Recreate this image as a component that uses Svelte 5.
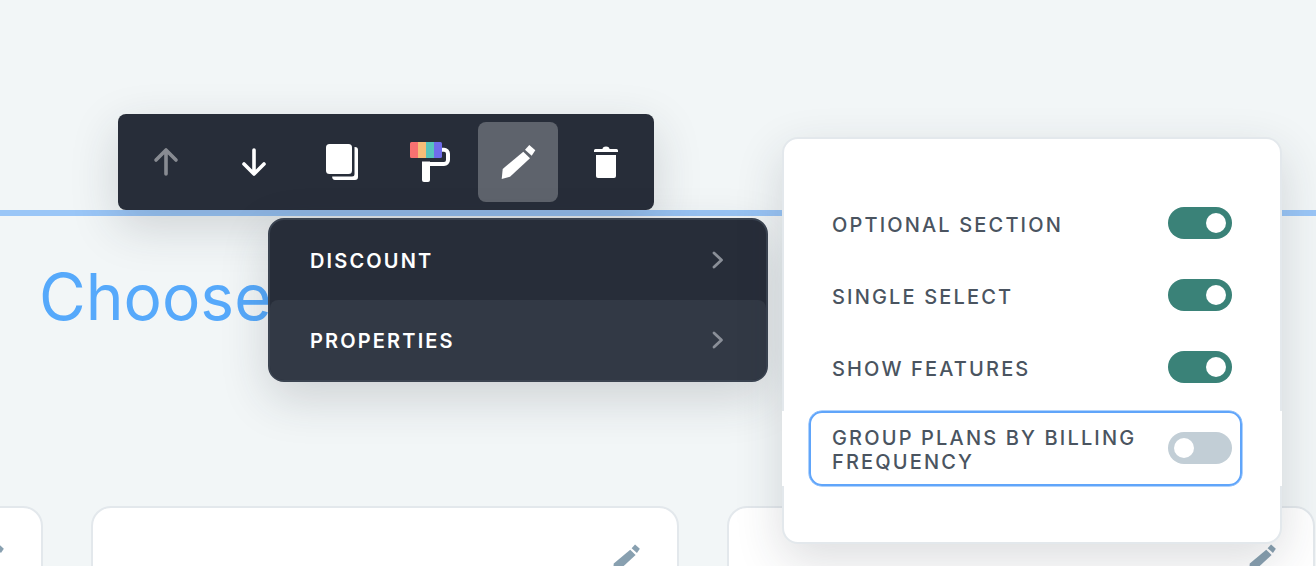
<script>
	const menuItems = [
		{ label: 'DISCOUNT', active: false },
		{ label: 'PROPERTIES', active: true }
	];

	const settings = [
		{ label: 'OPTIONAL SECTION', on: true, focused: false },
		{ label: 'SINGLE SELECT', on: true, focused: false },
		{ label: 'SHOW FEATURES', on: true, focused: false },
		{ label: 'GROUP PLANS BY BILLING FREQUENCY', on: false, focused: true }
	];

	const pencilBody = 'M3.7 37 L4.7 27 L25.3 9.7 L32 16.3 L12 34.7 Z';
	const pencilCap = 'M31.3 3 L37.3 8.3 L33.7 13.7 L27 7.7 Z';
</script>

<div class="page">
	<section class="section">
		<h1 class="title">Choose</h1>
		<div class="cards">
			{#each [0, 1, 2] as card (card)}
				<div class="card">
					<svg class="card-edit" viewBox="0 0 40 40" width="32" height="32">
						<path d={pencilBody} />
						<path d={pencilCap} />
					</svg>
				</div>
			{/each}
		</div>
	</section>

	<div class="toolbar">
		<button class="tool" type="button" aria-label="Move up">
			<svg viewBox="0 0 40 40" width="40" height="40" fill="none" stroke="#fff" stroke-opacity="0.45" stroke-width="3.6" stroke-linecap="round" stroke-linejoin="round">
				<path d="M20 8 V32 M10 18 L20 8 L30 18" />
			</svg>
		</button>
		<button class="tool" type="button" aria-label="Move down">
			<svg viewBox="0 0 40 40" width="40" height="40" fill="none" stroke="#fff" stroke-width="3.6" stroke-linecap="round" stroke-linejoin="round">
				<path d="M20 8 V32 M10 22 L20 32 L30 22" />
			</svg>
		</button>
		<button class="tool" type="button" aria-label="Duplicate">
			<svg viewBox="0 0 40 40" width="40" height="40" fill="#fff">
				<rect x="4" y="2" width="26" height="30" rx="3.5" />
				<path d="M32.5 5 H33 A3 3 0 0 1 36 8 V35 A3 3 0 0 1 33 38 H13 A3 3 0 0 1 10.200 34.500 H30 A2.500 2.500 0 0 0 32.500 32 Z" />
			</svg>
		</button>
		<button class="tool" type="button" aria-label="Theme">
			<svg viewBox="0 0 40 40" width="40" height="40" fill="none">
				<path d="M30 7.800 H34 A4 4 0 0 1 38 11.800 V18 A4 4 0 0 1 34 22 H16" stroke="#fff" stroke-width="4" />
				<path d="M12 19.500 H20 V38 A2 2 0 0 1 18 40 H14 A2 2 0 0 1 12 38 Z" fill="#fff" />
				<path d="M1.500 0 H8 V16 H1.500 A1.500 1.500 0 0 1 0 14.500 V1.500 A1.500 1.500 0 0 1 1.500 0 Z" fill="#f87171" />
				<rect x="8" y="0" width="8" height="16" fill="#f6bd77" />
				<rect x="16" y="0" width="8" height="16" fill="#56c4bb" />
				<path d="M24 0 H30.500 A1.500 1.500 0 0 1 32 1.500 V14.500 A1.500 1.500 0 0 1 30.500 16 H24 Z" fill="#6f6cea" />
			</svg>
		</button>
		<button class="tool selected" type="button" aria-label="Edit">
			<svg viewBox="0 0 40 40" width="40" height="40" fill="#fff">
				<path d={pencilBody} />
				<path d={pencilCap} />
			</svg>
		</button>
		<button class="tool" type="button" aria-label="Delete">
			<svg viewBox="0 0 40 40" width="40" height="40" fill="#fff">
				<path d="M8 8.500 A1.500 1.500 0 0 1 9.500 7 H16.500 A3.500 2.500 0 0 1 23.500 7 H30.500 A1.500 1.500 0 0 1 32 8.500 V10 H8 Z" />
				<path d="M10 13 H30 V34 A2 2 0 0 1 28 36 H12 A2 2 0 0 1 10 34 Z" />
			</svg>
		</button>
	</div>

	<div class="menu">
		{#each menuItems as item (item.label)}
			<div class="menu-item" class:active={item.active}>
				<span class="menu-label">{item.label}</span>
				<svg viewBox="0 0 14 20" width="14" height="20" fill="none" stroke="#8a8f98" stroke-width="2.8" stroke-linecap="round" stroke-linejoin="round">
					<path d="M2 3 L9.500 10 L2 17" />
				</svg>
			</div>
		{/each}
	</div>

	<aside class="panel">
		{#each settings as row (row.label)}
			<div class="band" class:focused={row.focused}>
				<div class="row">
					<span class="row-label">{row.label}</span>
					<span class="switch" class:on={row.on}><span class="knob"></span></span>
				</div>
			</div>
		{/each}
	</aside>
</div>

<style>
	:global(body) {
		margin: 0;
		background: #f2f6f7;
		font-family: Inter, "Liberation Sans", sans-serif;
	}

	.page {
		position: relative;
		height: 566px;
		overflow: hidden;
		padding-top: 210px;
		box-sizing: border-box;
	}

	.section {
		border-top: 6px solid #9ac6f7;
	}

	.title {
		margin: 0;
		padding: 41px 0 0 39px;
		font-size: 64px;
		line-height: 80px;
		font-weight: 400;
		color: #56a9fb;
	}

	.cards {
		display: flex;
		gap: 48px;
		margin: 169px 0 0 -545px;
	}

	.card {
		flex: none;
		display: flex;
		justify-content: flex-end;
		width: 588px;
		height: 300px;
		padding: 34px 35px;
		box-sizing: border-box;
		background: #fff;
		border: 2px solid #e3e8ec;
		border-radius: 20px;
	}

	.card-edit {
		fill: #88a0b0;
	}

	.toolbar {
		position: absolute;
		left: 118px;
		top: 114px;
		display: flex;
		gap: 8px;
		padding: 8px;
		background: #272d39;
		border-radius: 8px;
		box-shadow: 0 16px 48px rgba(39, 45, 57, 0.18);
	}

	.tool {
		display: flex;
		align-items: center;
		justify-content: center;
		width: 80px;
		height: 80px;
		padding: 0;
		background: none;
		border: none;
		border-radius: 8px;
	}

	.tool.selected {
		background: #5e636c;
	}

	.menu {
		position: absolute;
		left: 268px;
		top: 218px;
		width: 500px;
		box-sizing: border-box;
		background: #272d39;
		border: 2px solid #3a4350;
		border-radius: 16px;
		overflow: hidden;
		box-shadow: 0 16px 48px rgba(39, 45, 57, 0.18);
	}

	.menu-item {
		display: flex;
		align-items: center;
		justify-content: space-between;
		height: 80px;
		padding: 0 40px;
		font-size: 20px;
		font-weight: 600;
		letter-spacing: 2.15px;
		color: #fff;
		border-radius: 8px;
	}

	.menu-label {
		padding-top: 2px;
	}

	.menu-item.active {
		background: #323945;
	}

	.panel {
		position: absolute;
		left: 782px;
		top: 137px;
		width: 500px;
		box-sizing: border-box;
		display: flex;
		flex-direction: column;
		gap: 16px;
		padding: 56px 48px;
		background: #fff;
		border: 2px solid #e3e8ec;
		border-radius: 16px;
		box-shadow: 0 16px 48px rgba(39, 45, 57, 0.16);
	}

	/* the focused row's white band runs over the panel border */
	.band.focused {
		margin: 0 -50px;
		padding: 0 40px 0 27px;
		background: #fff;
	}

	.row {
		display: flex;
		align-items: center;
		justify-content: space-between;
		gap: 24px;
		height: 56px;
		font-size: 20px;
		font-weight: 500;
		line-height: 24px;
		letter-spacing: 2.15px;
		color: #4a5460;
	}

	.row-label {
		position: relative;
		top: 2px;
	}

	.band.focused .row {
		height: 75px;
		box-sizing: border-box;
		padding: 0 8px 0 21px;
		border: 2px solid #60a5fa;
		border-radius: 13px;
		box-shadow: 0 0 0 0.5px #60a5fa;
	}

	.band.focused .row-label {
		top: 1px;
	}

	.band.focused .switch {
		position: relative;
		top: -1px;
	}

	.switch {
		flex: none;
		display: flex;
		align-items: center;
		justify-content: flex-start;
		box-sizing: border-box;
		width: 64px;
		height: 32px;
		padding: 0 6px;
		border-radius: 16px;
		background: #c2ced6;
	}

	.switch.on {
		justify-content: flex-end;
		background: #3a8278;
	}

	.knob {
		width: 20px;
		height: 20px;
		border-radius: 50%;
		background: #fff;
	}
</style>
